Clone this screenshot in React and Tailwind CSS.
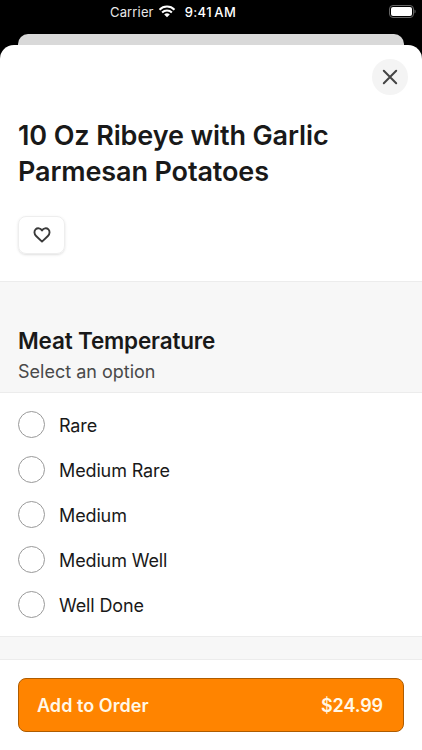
import React from "react";

const options = ["Rare", "Medium Rare", "Medium", "Medium Well", "Well Done"];

function StatusBar() {
  return (
    <div className="flex h-[34px] items-start pl-[110px] pt-[4px] text-[13px] leading-4 text-white">
      <span className="tracking-[0.15px] text-[#e8e8e8]">Carrier</span>
      <svg className="ml-[4px] mt-px h-[13px] w-[18px]" viewBox="0 0 18 13" fill="none">
        <path d="M1.5 4.7a10.6 10.6 0 0 1 15 0M4.1 7.5a6.9 6.9 0 0 1 9.8 0" stroke="white" strokeWidth="2" />
        <path d="M6.2 9.5a4 4 0 0 1 5.6 0L9 12.3Z" fill="white" />
      </svg>
      <span className="ml-[9px] font-medium tracking-[0.4px] [word-spacing:-1.5px]">9:41 AM</span>
      <svg className="ml-auto mr-[6px] mt-px h-[13px] w-[27px]" viewBox="0 0 27 13" fill="none">
        <rect x=".5" y=".5" width="24" height="12" rx="3.5" stroke="#666" />
        <rect x="2" y="2" width="21" height="9" rx="2" fill="white" />
        <path d="M25.5 4.5v4c1.5-.6 1.5-3.4 0-4Z" fill="#666" />
      </svg>
    </div>
  );
}

function App() {
  return (
    <div className="h-[750px] w-[422px] overflow-hidden bg-black font-['Inter',sans-serif] text-[#191919]">
      <StatusBar />
      <div className="mx-[18px] h-[11px] rounded-t-[10px] bg-[#d9d9d9]" />
      <main className="flex h-[705px] flex-col rounded-t-[14px] bg-white">
        <header className="h-[236px] px-[18px] pt-[14px]">
          <button className="-mr-[4px] ml-auto flex size-9 items-center justify-center rounded-full bg-[#f4f4f4]">
            <svg className="size-4" viewBox="0 0 16 16" fill="none">
              <path d="m1.8 1.8 12.4 12.4m0-12.4L1.8 14.2" stroke="#444" strokeWidth="2" strokeLinecap="round" />
            </svg>
          </button>
          <h1 className="mt-[23px] text-[27px] font-semibold leading-9 tracking-[-0.12px]">
            10 Oz Ribeye with Garlic
            <br />
            Parmesan Potatoes
          </h1>
          <button className="mt-[26px] flex h-[38px] w-[47px] items-center justify-center rounded-lg border border-[#eee] shadow-sm">
            <svg className="size-[18px]" viewBox="0 0 18 18" fill="none">
              <path
                d="M9 15.6 3.1 10C1 8 1 5 2.6 3.4c1.8-1.8 4.9-1.4 6.4 1 1.5-2.4 4.6-2.8 6.4-1C17 5 17 8 14.9 10Z"
                stroke="#3a3a3a"
                strokeWidth="1.9"
                strokeLinejoin="round"
              />
            </svg>
          </button>
        </header>
        <section>
          <div className="h-[112px] border-y border-[#ececec] bg-[#f7f7f7] px-[18px] pt-[43px]">
            <h2 className="text-[22.5px] font-semibold leading-8 tracking-[-0.17px]">Meat Temperature</h2>
            <p className="mt-px text-[18px] leading-7 text-[#494949]">Select an option</p>
          </div>
          <div className="h-[244px] border-b border-[#ececec] px-[18px] pt-[9px]">
            {options.map((option) => (
              <label key={option} className="flex h-[45px] items-center gap-[14px] text-[18px] tracking-[-0.13px]">
                <span className="size-[27px] rounded-full border border-[#999]" />
                <span className="pt-px">{option}</span>
              </label>
            ))}
          </div>
        </section>
        <div className="h-[22px] bg-[#f7f7f7]" />
        <footer className="flex-1 border-t border-[#ececec] px-[18px] pt-[18px]">
          <button className="flex h-[54px] w-full items-center justify-between rounded-lg border border-[#ae5c00] bg-[#ff8400] pl-[18px] pr-[20px] text-[18px] font-semibold text-[#fff8e8]">
            <span className="tracking-[0.05px]">Add to Order</span>
            <span className="tracking-[-0.1px]">$24.99</span>
          </button>
        </footer>
      </main>
    </div>
  );
}

export default App;
